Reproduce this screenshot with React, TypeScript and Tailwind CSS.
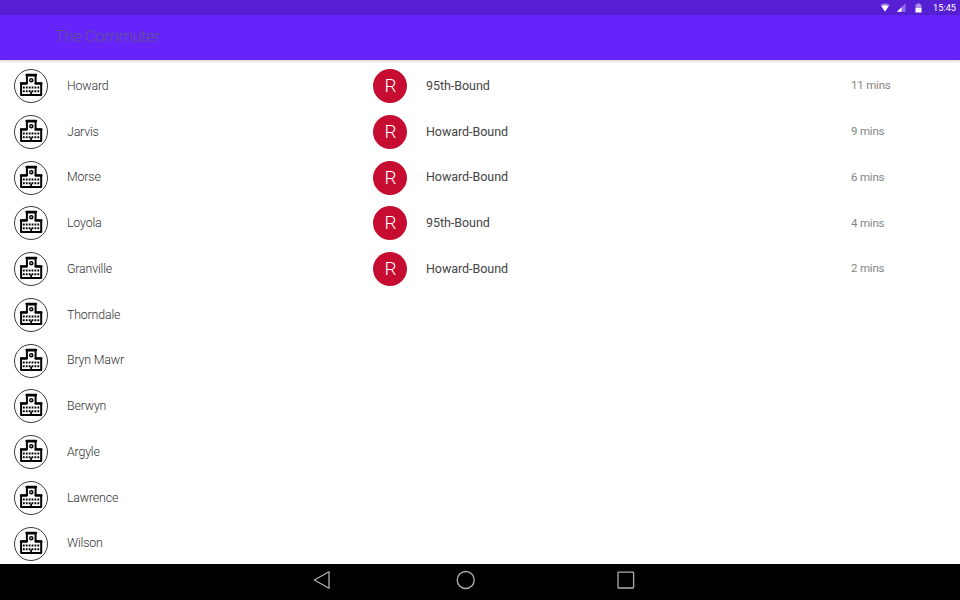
const stations = ['Howard', 'Jarvis', 'Morse', 'Loyola', 'Granville', 'Thorndale', 'Bryn Mawr', 'Berwyn', 'Argyle', 'Lawrence', 'Wilson'];

const arrivals = [
  { name: '95th-Bound', time: '11 mins' },
  { name: 'Howard-Bound', time: '9 mins' },
  { name: 'Howard-Bound', time: '6 mins' },
  { name: '95th-Bound', time: '4 mins' },
  { name: 'Howard-Bound', time: '2 mins' },
];

function StationIcon() {
  return (
    <svg width="34" height="34" viewBox="0 0 34 34" className="mt-[0.7px] shrink-0">
      <circle cx="17" cy="17" r="16.5" fill="#fff" stroke="#3a3a3a" strokeWidth="1" />
      <path d="M12.9 14.6V6.4H21.6V14.6H27.2V26H7.1V14.6H12.9" fill="none" stroke="#000" strokeWidth="2" strokeLinejoin="round" />
      <path d="M12.5 5.9H22.1M6.9 14.4H12.9M21.6 14.4H27.4" stroke="#000" strokeWidth="2.3" strokeLinecap="round" />
      <circle cx="17.3" cy="11.2" r="1.6" fill="#fff" stroke="#000" strokeWidth="1.4" />
      <path d="M17.3 10.3V11.4H18.5" fill="none" stroke="#000" strokeWidth="0.5" />
      <path d="M8.9 18.5H25.3M8.9 22.3H25.3" stroke="#000" strokeWidth="2" strokeDasharray="1.8 1.1" />
      <path d="M17.1 22.5V27" stroke="#000" strokeWidth="1.7" />
    </svg>
  );
}

function StatusBar() {
  return (
    <div className="flex h-[15px] shrink-0 items-center justify-end bg-[#561fd3] pr-[4px] text-[9.2px] leading-none text-white">
      <svg width="10" height="9" viewBox="0 0 10 9" className="mr-[7px]">
        <path d="M0.3 2Q5 -1.5 9.7 2L5 8.5Z" fill="#fff" fillOpacity="0.4" />
        <path d="M1.5 3.2Q5 1.2 8.5 3.2L5 8.5Z" fill="#fff" />
      </svg>
      <svg width="9" height="9" viewBox="0 0 9 9" className="mr-[9px]">
        <path d="M0 8.7L8.5 0V8.7Z" fill="#fff" fillOpacity="0.35" />
        <path d="M0 8.7L4.5 4.2V8.7Z" fill="#fff" />
      </svg>
      <svg width="7" height="10" viewBox="0 0 7 10" className="mr-[11px]">
        <path d="M0.5 1.5H2V0.5H5V1.5H6.5V5H0.5Z" fill="#fff" fillOpacity="0.5" />
        <path d="M0.5 5H6.5V9.5H0.5Z" fill="#fff" />
      </svg>
      <span>15:45</span>
    </div>
  );
}

export default function App() {
  return (
    <div className="flex h-[600px] w-[960px] flex-col overflow-hidden bg-white font-['Roboto',sans-serif]">
      <StatusBar />
      <header className="z-10 flex h-[45px] shrink-0 items-center bg-[#6624fa] pl-[55px] pb-[1px] shadow-[0_1px_3px_rgba(0,0,0,0.2)]">
        <h1 className="text-[16.5px] font-light leading-none tracking-[-0.38px] text-[#62558f]">The Commuter</h1>
      </header>
      <main className="flex h-[504px] shrink-0 overflow-hidden pt-[3px]">
        <ul className="w-[359px]">
          {stations.map((name) => (
            <li key={name} className="flex h-[45.75px] items-center pl-[14px]">
              <StationIcon />
              <span className="ml-[19px] text-[12.4px] font-light leading-4 tracking-[-0.18px] text-[#303030]">{name}</span>
            </li>
          ))}
        </ul>
        <ul className="flex-1">
          {arrivals.map((arrival, i) => (
            <li key={i} className="flex h-[45.75px] items-center pl-[14px]">
              <span className="mt-[0.7px] flex size-[34px] items-center justify-center rounded-full bg-[#c60c30] pb-px pl-px text-[19px] font-light leading-none text-white">R</span>
              <span className="ml-[19px] w-[425px] text-[12.5px] leading-4 tracking-[-0.05px] text-[#444]">{arrival.name}</span>
              <span className="pb-[1.1px] text-[11.5px] leading-4 tracking-[-0.19px] text-[#858585]">{arrival.time}</span>
            </li>
          ))}
        </ul>
      </main>
      <nav className="flex h-[36px] shrink-0 items-center bg-black pb-[4px]">
        <svg width="20" height="20" viewBox="0 0 20 20" className="ml-[312px]" fill="none" stroke="#b0b0b0" strokeWidth="1.3">
          <path d="M17 1.7V18.3L2.3 10Z" strokeLinejoin="round" />
        </svg>
        <svg width="20" height="20" viewBox="0 0 20 20" className="ml-[124px]" fill="none" stroke="#b0b0b0" strokeWidth="1.3">
          <circle cx="9.7" cy="10" r="8.5" />
        </svg>
        <svg width="20" height="20" viewBox="0 0 20 20" className="ml-[140px]" fill="none" stroke="#b0b0b0" strokeWidth="1.3">
          <rect x="2" y="2.2" width="15.6" height="15.8" rx="0.5" />
        </svg>
      </nav>
    </div>
  );
}
